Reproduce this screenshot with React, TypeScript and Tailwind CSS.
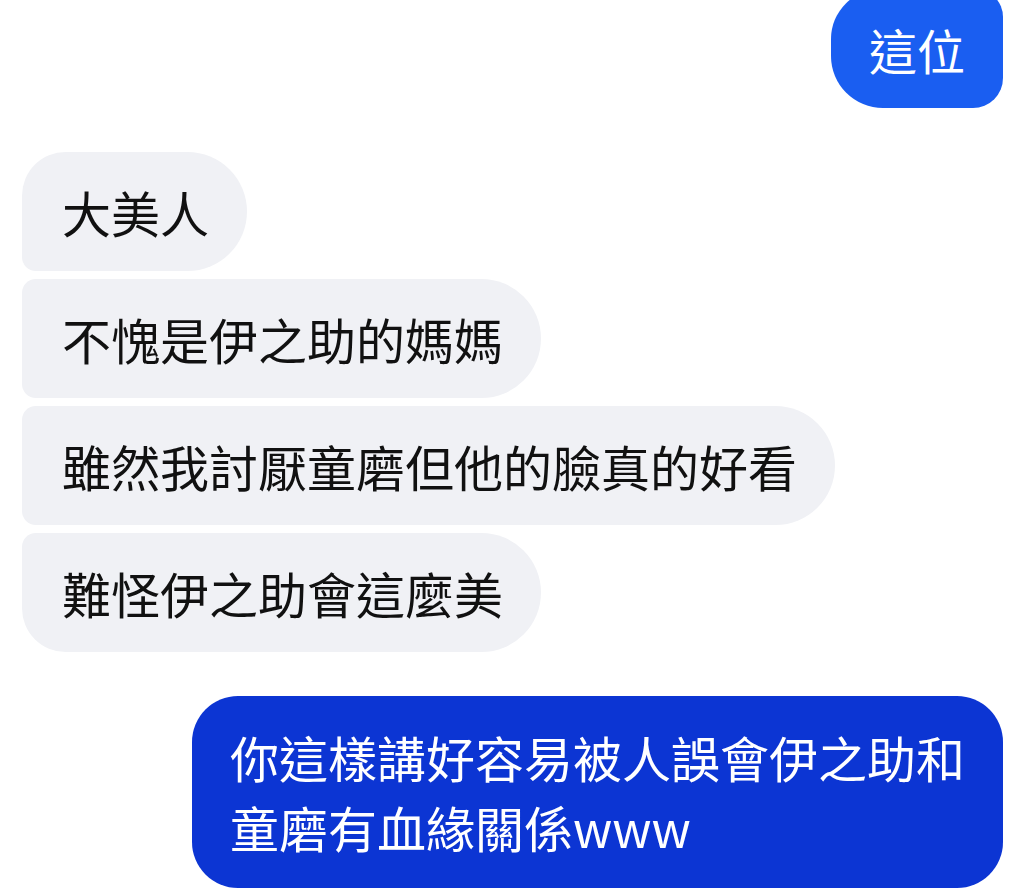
const FONT = "font-['Noto_Sans_CJK_TC','Noto_Sans_CJK_SC',sans-serif]";

const received = [
  { text: "大美人", corner: "rounded-tl-[44px] rounded-bl-[14px]" },
  { text: "不愧是伊之助的媽媽", corner: "rounded-tl-[14px] rounded-bl-[14px]" },
  { text: "雖然我討厭童磨但他的臉真的好看", corner: "rounded-tl-[14px] rounded-bl-[14px]" },
  { text: "難怪伊之助會這麼美", corner: "rounded-tl-[14px] rounded-bl-[44px]" },
];

export default function App() {
  return (
    <div className={`w-[1024px] h-[894px] overflow-hidden bg-white flex flex-col ${FONT}`}>
      {/* outgoing, cut off at top */}
      <div className="flex justify-end pr-[21px] -mt-[11px]">
        <div className="h-[119px] px-[38px] flex items-center bg-[#1a5ef1] text-white text-[48px] leading-[56px] rounded-tl-[50px] rounded-tr-[28px] rounded-bl-[52px] rounded-br-[30px]">
          這位
        </div>
      </div>

      {/* incoming group */}
      <div className="flex flex-col items-start gap-[8px] pl-[22px] mt-[44px]">
        {received.map((m) => (
          <div
            key={m.text}
            className={`h-[119px] pl-[40px] pr-[38px] flex items-center bg-[#f0f1f5] text-[#111111] text-[49px] leading-[56px] rounded-r-[60px] ${m.corner}`}
          >
            {m.text}
          </div>
        ))}
      </div>

      {/* outgoing */}
      <div className="flex justify-end pr-[21px] mt-[44px]">
        <div className="w-[811px] pl-[38px] pr-[30px] py-[26px] bg-[#0c35d3] text-white text-[49px] leading-[70px] rounded-[46px]">
          你這樣講好容易被人誤會伊之助和童磨有血緣關係www
        </div>
      </div>
    </div>
  );
}
